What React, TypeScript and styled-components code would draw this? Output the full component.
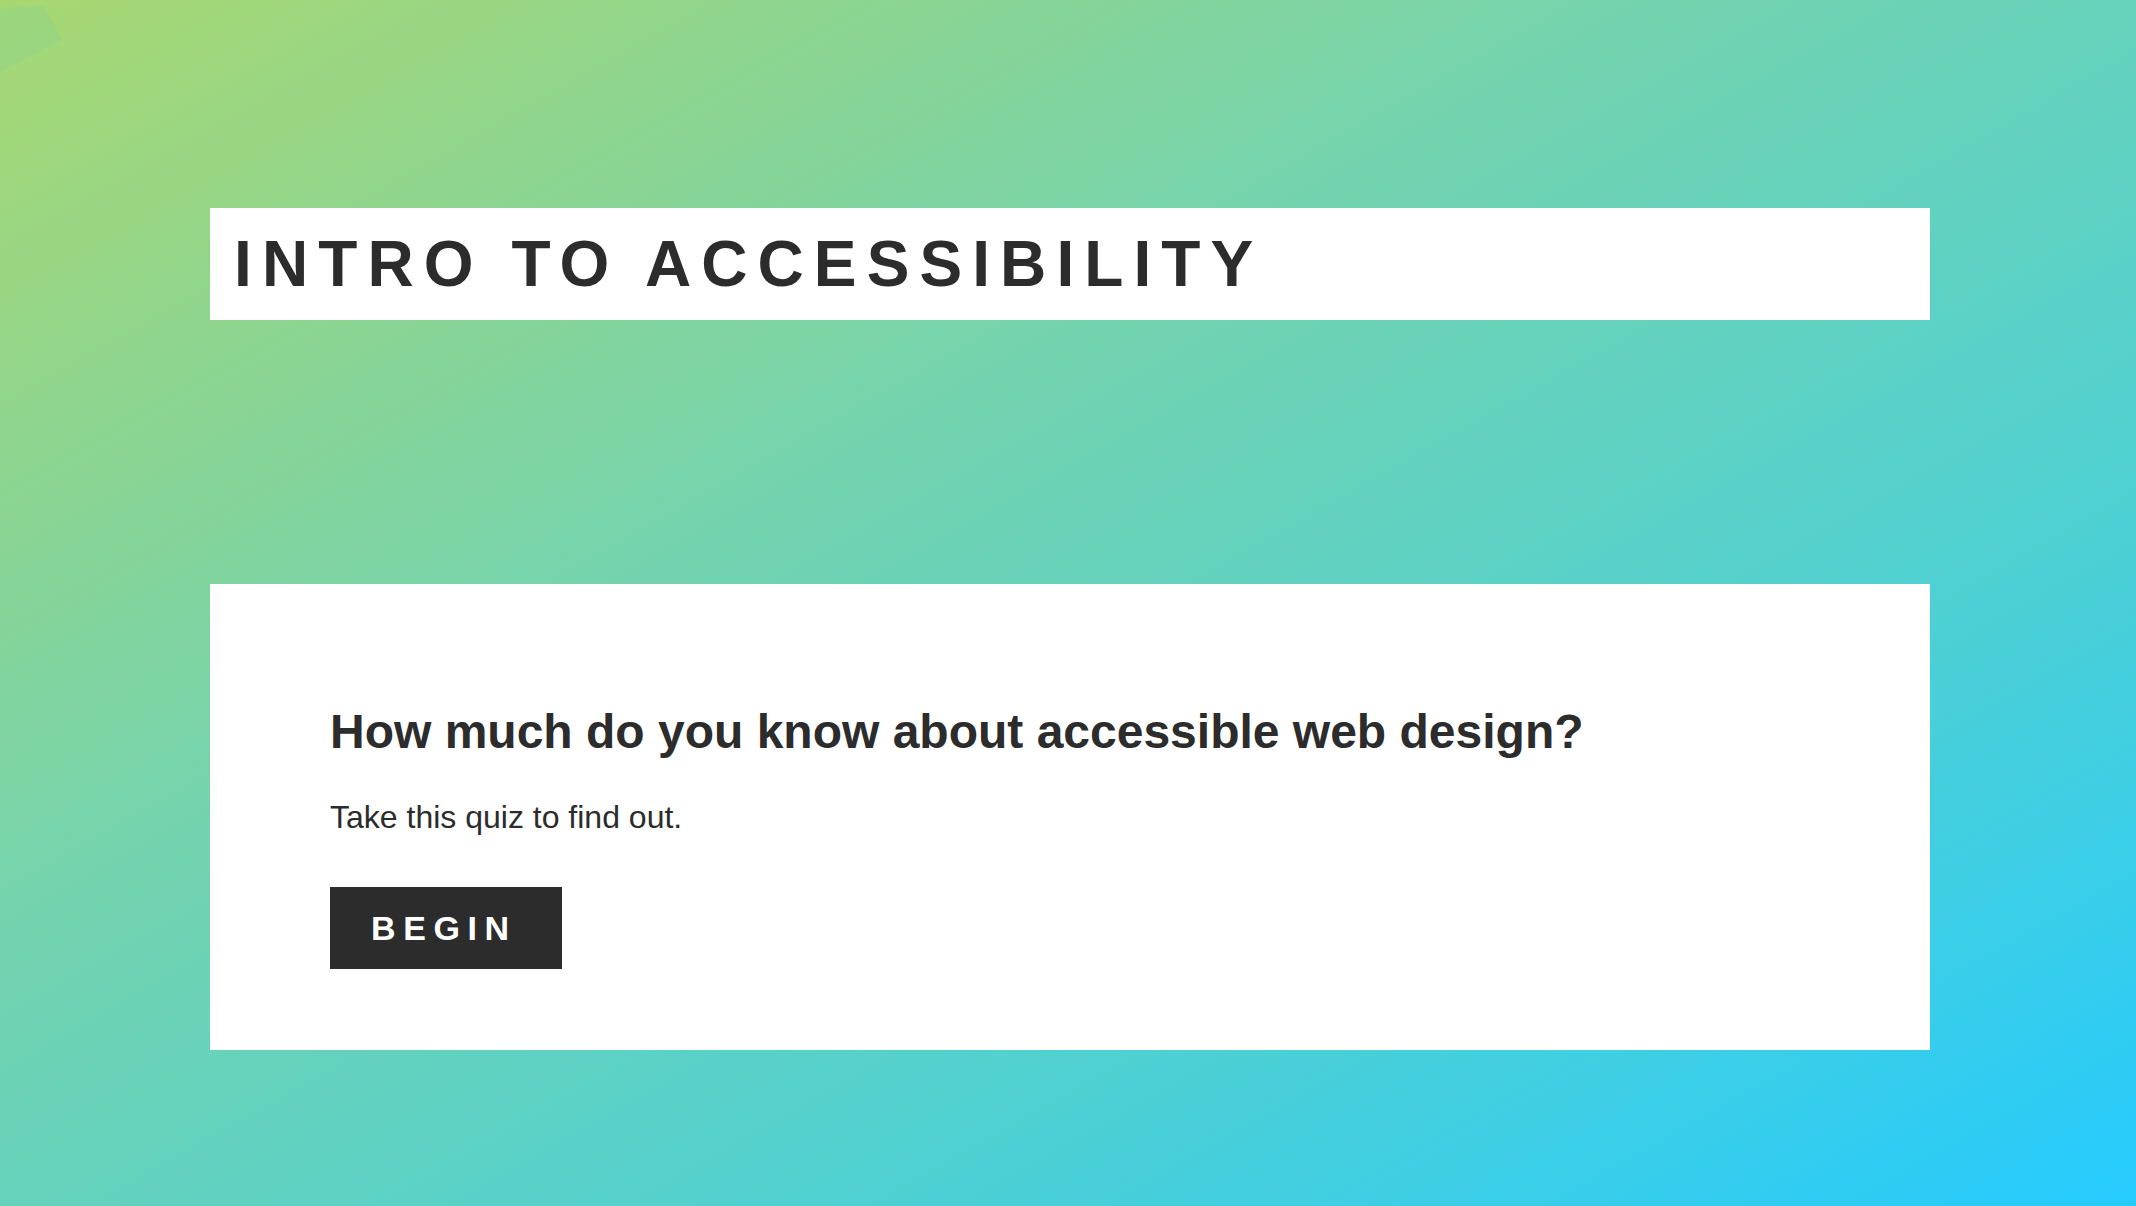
import React from "react";
import styled, { createGlobalStyle } from "styled-components";

const GlobalStyle = createGlobalStyle`
  html, body {
    margin: 0;
    padding: 0;
  }
  body {
    font-family: "Liberation Sans", Arial, Helvetica, sans-serif;
    color: #2c2c2c;
  }
  * { box-sizing: border-box; }
`;

const Page = styled.div`
  position: relative;
  width: 100%;
  min-height: 100vh;
  overflow: hidden;
  background: linear-gradient(to bottom right, #a8d771 0%, #72d3b0 40%, #4fd0d2 70%, #25cbfe 100%);
  padding: 208px 206px 0 210px;
`;

const Smudge = styled.svg`
  position: absolute;
  left: 0;
  top: 0;
  width: 70px;
  height: 80px;
`;

const Main = styled.main`
  display: flex;
  flex-direction: column;
  gap: 264px;
  width: 1720px;
`;

const TitleBar = styled.header`
  background: #ffffff;
  height: 112px;
  padding: 0 24px;
  display: flex;
  align-items: center;
`;

const Title = styled.h1`
  margin: 0;
  font-size: 64px;
  line-height: 112px;
  font-weight: 700;
  letter-spacing: 10.1px;
  text-transform: uppercase;
  color: #2c2c2c;
`;

const Card = styled.section`
  background: #ffffff;
  height: 466px;
  padding: 120px 120px 80px;
  display: flex;
  flex-direction: column;
  align-items: flex-start;
`;

const Heading = styled.h2`
  margin: 0 0 34px;
  font-size: 48px;
  line-height: 55px;
  font-weight: 700;
  color: #2c2c2c;
`;

const Lead = styled.p`
  margin: 0 0 46px;
  font-size: 32px;
  line-height: 48px;
  font-weight: 400;
  color: #2c2c2c;
`;

const Button = styled.button`
  appearance: none;
  border: none;
  border-radius: 0;
  background: #2c2c2c;
  color: #ffffff;
  font-family: "Liberation Sans", Arial, Helvetica, sans-serif;
  font-size: 34px;
  line-height: 42px;
  font-weight: 700;
  letter-spacing: 7.6px;
  padding: 20px 30px 20px 41px;
  height: 82px;
  width: 232px;
  text-align: left;
  cursor: pointer;
`;

export default function App() {
  return (
    <>
      <GlobalStyle />
      <Page>
        <Smudge viewBox="0 0 70 80" aria-hidden="true">
          <polygon points="0,8 44,6 62,40 0,72" fill="#8fd48b" opacity="0.45" />
        </Smudge>
        <Main>
          <TitleBar>
            <Title>Intro to Accessibility</Title>
          </TitleBar>
          <Card>
            <Heading>How much do you know about accessible web design?</Heading>
            <Lead>Take this quiz to find out.</Lead>
            <Button type="button">BEGIN</Button>
          </Card>
        </Main>
      </Page>
    </>
  );
}
